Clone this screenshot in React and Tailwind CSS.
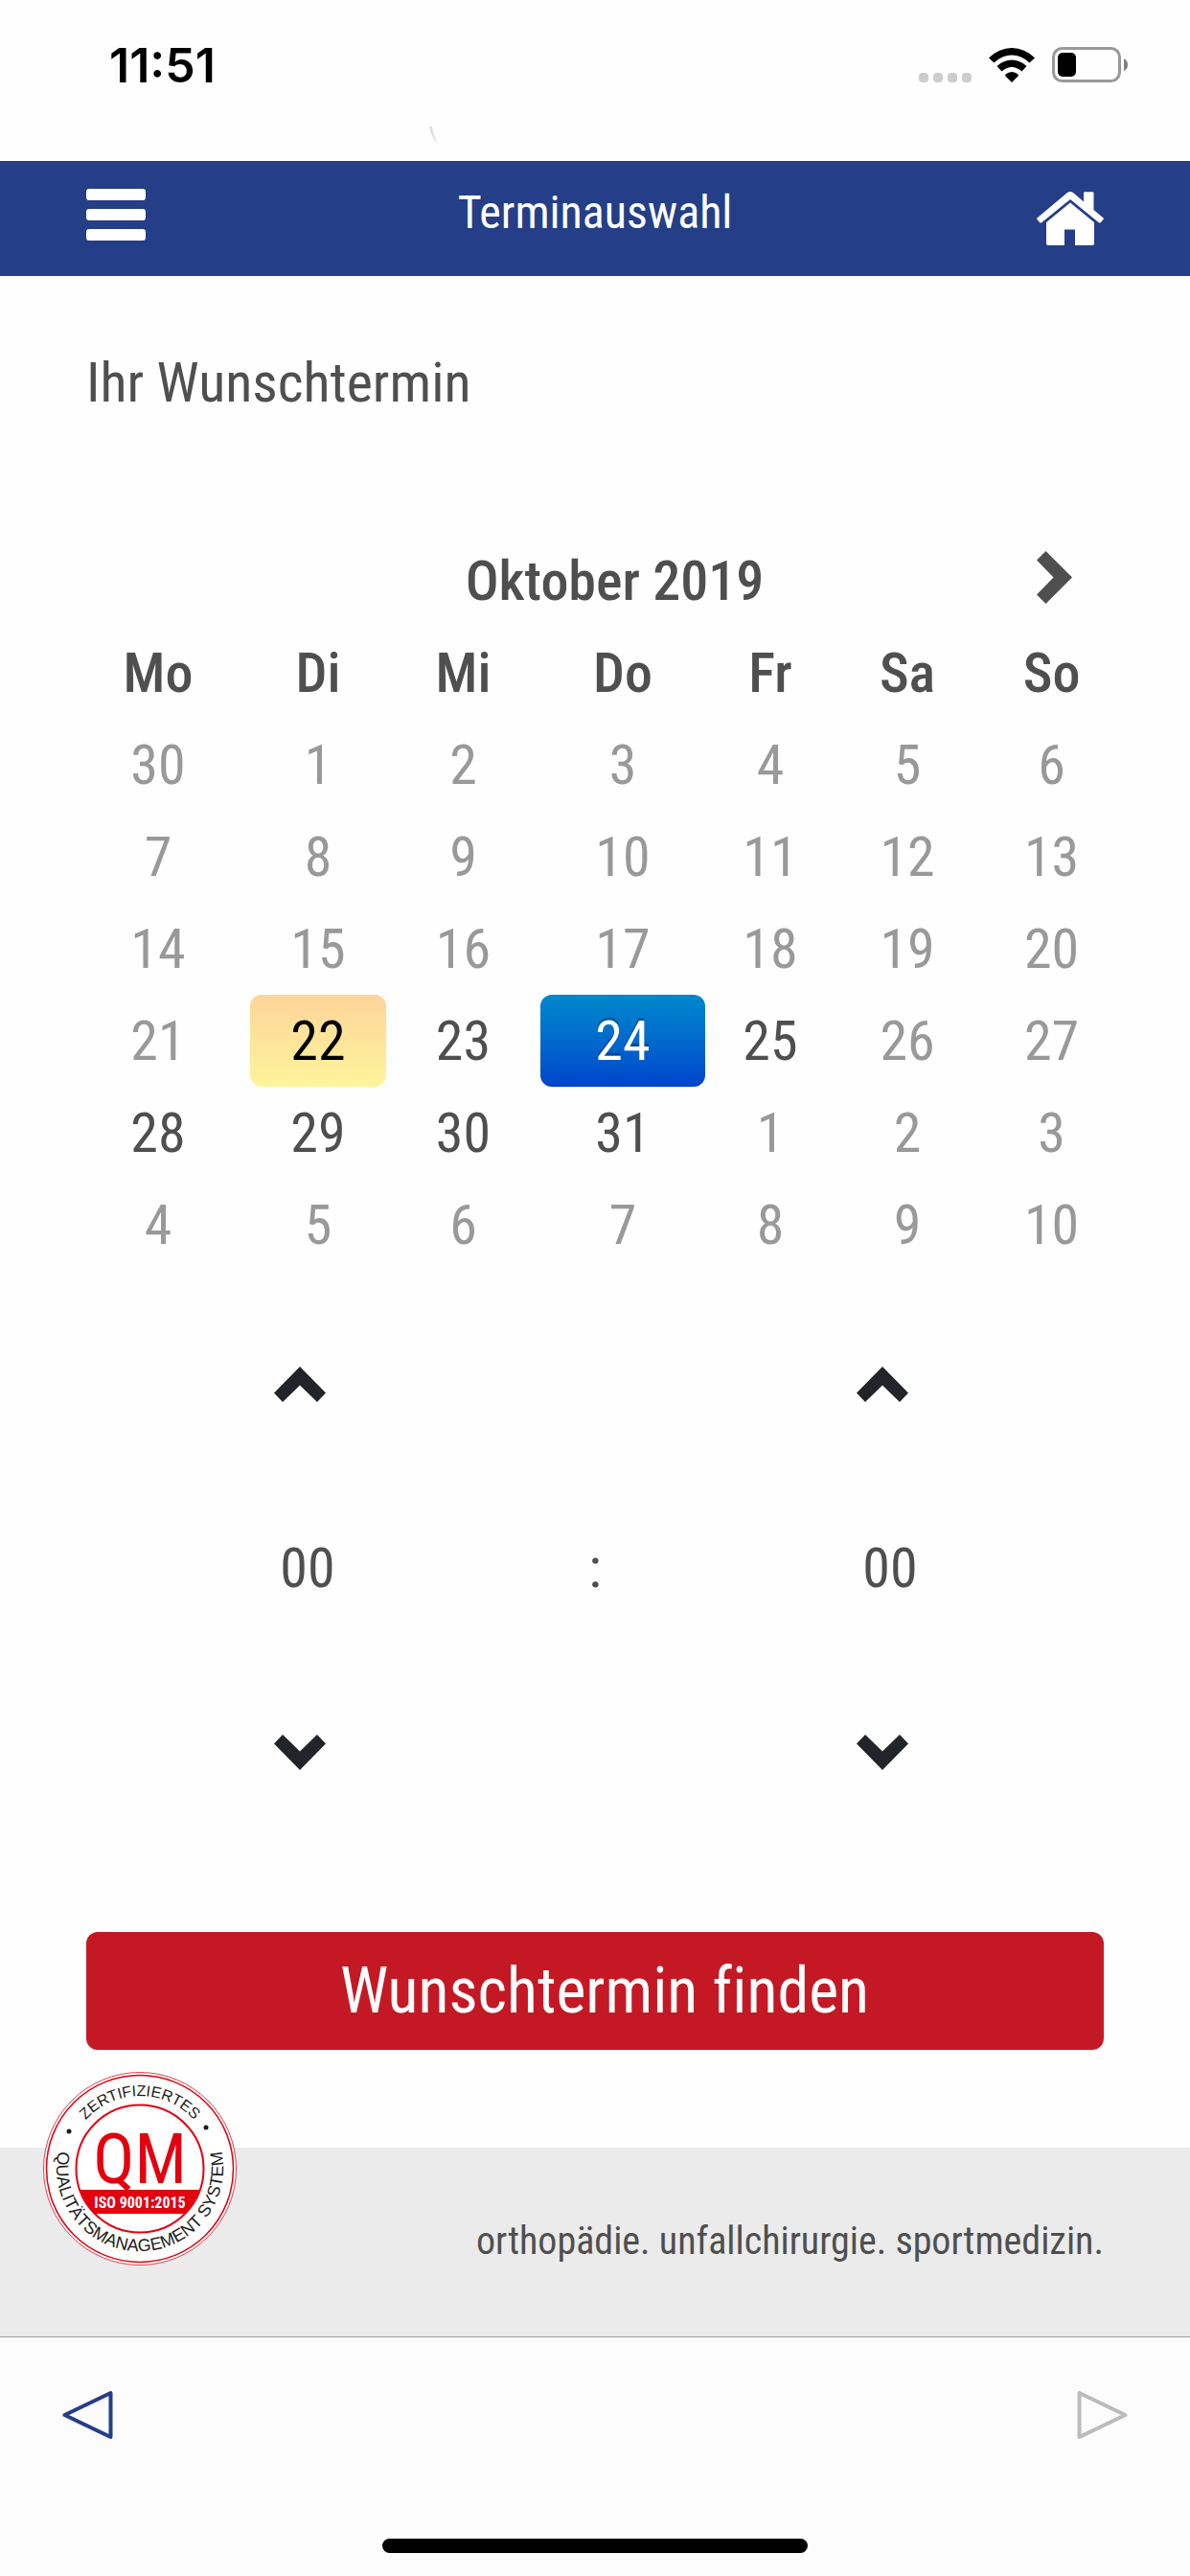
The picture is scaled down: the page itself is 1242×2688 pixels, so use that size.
/**
 * App.jsx
 * Appointment picker: month calendar, time spinner and practice footer.
 */

import { useState } from 'react';
import clsx from 'clsx';

const WEEKDAYS = ['Mo', 'Di', 'Mi', 'Do', 'Fr', 'Sa', 'So'];

const WEEKS = [
  [30, 1, 2, 3, 4, 5, 6],
  [7, 8, 9, 10, 11, 12, 13],
  [14, 15, 16, 17, 18, 19, 20],
  [21, 22, 23, 24, 25, 26, 27],
  [28, 29, 30, 31, 1, 2, 3],
  [4, 5, 6, 7, 8, 9, 10],
];

const TODAY = '3-1';

// Bookable slots, keyed by week index and weekday index
const OPEN_DAYS = ['3-1', '3-2', '3-3', '3-4', '4-0', '4-1', '4-2', '4-3'];

const pad = (n) => String(n).padStart(2, '0');

const StatusBar = () => (
  <div className="relative flex h-[168px] items-start justify-between pt-10 pr-16 pl-[114px]">
    <span className="font-['Inter'] text-[50px] leading-[56px] font-semibold text-black">11:51</span>
    <div className="flex items-end gap-[18px] pt-[9px]">
      <div className="flex gap-[5px]">
        <span className="size-[10px] rounded-[4px] bg-[#cccccc]" />
        <span className="size-[10px] rounded-[4px] bg-[#cccccc]" />
        <span className="size-[10px] rounded-[4px] bg-[#cccccc]" />
        <span className="size-[10px] rounded-[4px] bg-[#cccccc]" />
      </div>
      <svg className="h-9 w-12" viewBox="0 0 48 36" aria-hidden="true">
        <path d="M0 10.500Q10.500 0 24 0T48 10.500L42.500 15.500Q34 7.500 24 7.500T5.500 15.500Z" />
        <path d="M8.500 19Q15.500 12.500 24 12.500T39.500 19L34.500 24.500Q29.500 20 24 20T13.500 24.500Z" />
        <path d="M17.500 27.500Q20.500 25 24 25T30.500 27.500Q31 28.500 30.500 29.500L24 36L17.500 29.500Q17 28.500 17.500 27.500Z" />
      </svg>
      <svg className="h-[37px] w-20" viewBox="0 0 80 37" aria-hidden="true">
        <rect x="1.500" y="1.500" width="69" height="34" rx="9" fill="none" stroke="#999999" strokeWidth="3" />
        <rect x="6" y="6" width="19" height="25" rx="5" />
        <path d="M75 12Q79 14 79 18.500T75 25Z" fill="#808080" />
      </svg>
    </div>
    {/* sliver of the spinner that peeks out under the status bar */}
    <svg className="absolute top-[132px] left-[447px] h-5 w-3" viewBox="0 0 12 20" aria-hidden="true">
      <path d="M1 0H4Q5 10 11 20Q3 11 1 0Z" fill="#dcdcdc" />
    </svg>
  </div>
);

const HomeIcon = () => (
  <svg className="h-14 w-[70px]" viewBox="0 0 70 56" fill="currentColor" aria-hidden="true">
    <path d="M35 8L5.500 32Q4 33 3 32L.500 29Q-.500 28 1 27L32 1Q35-1 38 1L49 10.500V1.500Q49 .300 50.500 .300H58Q59.500 .300 59.500 1.500V19L69 27Q70.500 28 69.500 29L67 32Q66 33 64.500 32Z" />
    <path d="M35 11.500L60 32V54Q60 56 58 56H40V39.500H29V56H12Q10 56 10 54V32Z" />
  </svg>
);

const ChevronUp = ({ className }) => (
  <svg className={clsx('h-[37px] w-[54px]', className)} viewBox="0 0 54 37" fill="currentColor" aria-hidden="true">
    <path d="M27 0L54 27.500L45 37L27 19.500L9 37L0 27.500Z" />
  </svg>
);

const Header = () => (
  <header className="flex h-[120px] items-center justify-between bg-[#243e87] px-[90px] text-white">
    <button type="button" aria-label="Menü" className="flex w-[70px] flex-col gap-[9px] pr-2 pb-2">
      <span className="h-3 w-full rounded-[3px] bg-white" />
      <span className="h-3 w-full rounded-[3px] bg-white" />
      <span className="h-3 w-full rounded-[3px] bg-white" />
    </button>
    <h1 className="pb-3 text-[48px] leading-[60px]">Terminauswahl</h1>
    <a href="#home" aria-label="Startseite">
      <HomeIcon />
    </a>
  </header>
);

const Calendar = ({ selected, onSelect }) => (
  <table className="w-full table-fixed text-center text-[58px] leading-[96px]">
    <colgroup>
      <col className="w-[192px]" />
      <col className="w-[142px]" />
      <col className="w-[161px]" />
      <col className="w-[172px]" />
      <col className="w-[136px]" />
      <col className="w-[150px]" />
      <col className="w-[151px]" />
    </colgroup>
    <thead>
      <tr className="h-24">
        <td />
        <th colSpan={5} className="p-0 font-medium">Oktober 2019</th>
        <td className="p-0">
          <button type="button" aria-label="Nächster Monat" className="flex h-24 w-full items-center justify-center pb-2 pl-1.5">
            <svg className="h-[55px] w-[37px]" viewBox="0 0 37 55" fill="currentColor" aria-hidden="true">
              <path d="M9.500 0L37 27.500L9.500 55L0 45.500L17.500 27.500L0 9.500Z" />
            </svg>
          </button>
        </td>
      </tr>
      <tr className="h-24">
        {WEEKDAYS.map((day) => (
          <th key={day} scope="col" className="p-0 font-medium">{day}</th>
        ))}
      </tr>
    </thead>
    <tbody>
      {WEEKS.map((week, w) => (
        <tr key={w} className="h-24">
          {week.map((day, d) => {
            const id = `${w}-${d}`;
            const open = OPEN_DAYS.includes(id);
            return (
              <td key={id} className="p-0">
                <button
                  type="button"
                  disabled={!open}
                  onClick={() => onSelect(id)}
                  className={clsx(
                    'block h-24 w-full rounded-xl',
                    !open && 'text-[#999999]',
                    id === selected &&
                      'bg-linear-to-b from-[#0088cc] to-[#0044cc] text-white [text-shadow:0_-3px_0_rgba(0,0,0,0.25)]',
                    id === TODAY && id !== selected && 'bg-linear-to-b from-[#fdd49a] to-[#fdf59a] text-black'
                  )}
                >
                  {day}
                </button>
              </td>
            );
          })}
        </tr>
      ))}
    </tbody>
  </table>
);

const Spinner = ({ label, value, max, onChange }) => (
  <div className="flex flex-col items-center text-[#212529]">
    <button
      type="button"
      aria-label={`${label} erhöhen`}
      onClick={() => onChange((value + 1) % max)}
      className="flex h-48 items-center pr-2"
    >
      <ChevronUp />
    </button>
    <span className="pl-2 text-[58px] leading-[192px] text-[#4f4f4f]">{pad(value)}</span>
    <button
      type="button"
      aria-label={`${label} verringern`}
      onClick={() => onChange((value + max - 1) % max)}
      className="flex h-48 items-center pr-2"
    >
      <ChevronUp className="rotate-180" />
    </button>
  </div>
);

const QmSeal = () => (
  <svg className="size-[202px]" viewBox="-101 -101 202 202" role="img" aria-label="QM ISO 9001:2015">
    <defs>
      <path id="seal-top" d="M-76 0A76 76 0 0 1 76 0" />
      <path id="seal-bottom" d="M-83-27A87 87 0 1 0 83-27" />
      <clipPath id="seal-inner">
        <circle r="66" />
      </clipPath>
    </defs>
    <circle r="100.500" fill="#ffffff" stroke="#e3404a" strokeWidth="1" />
    <circle r="97.500" fill="none" stroke="#e3000f" strokeWidth="1.500" />
    <circle r="66.500" fill="none" stroke="#e3000f" strokeWidth="2" />
    <rect x="-67" y="22" width="134" height="25" fill="#e3000f" clipPath="url(#seal-inner)" />
    <g className="font-['Liberation_Sans']" fill="#1d1d1b" textAnchor="middle">
      <text fontSize="16">
        <textPath href="#seal-top" startOffset="50%">ZERTIFIZIERTES</textPath>
      </text>
      <text fontSize="18">
        <textPath href="#seal-bottom" startOffset="50%">QUALITÄTSMANAGEMENT SYSTEM</textPath>
      </text>
      <circle cx="-74" cy="-39" r="2.500" />
      <circle cx="69" cy="-43" r="2.500" />
    </g>
    <text y="15" textAnchor="middle" fontSize="72" fill="#e3000f">QM</text>
    <text y="41" textAnchor="middle" fontSize="16" fontWeight="700" fill="#ffffff">ISO 9001:2015</text>
  </svg>
);

const Footer = () => (
  <footer className="relative border-b border-[#a0a0a0] bg-[#ebebeb] px-[90px] pt-[72px] pb-[73px] text-right">
    <div className="absolute -top-[79px] left-[45px]">
      <QmSeal />
    </div>
    <p className="text-[40px] leading-[52px]">orthopädie. unfallchirurgie. sportmedizin.</p>
  </footer>
);

const BrowserBar = () => (
  <nav className="flex h-[249px] flex-col justify-between bg-[#fcfcfc] px-16 pt-[55px] pb-6">
    <div className="flex justify-between">
      <button type="button" aria-label="Zurück" className="text-[#243e87]">
        <svg className="h-[52px] w-[54px]" viewBox="0 0 54 52" fill="none" stroke="currentColor" strokeWidth="4" strokeLinejoin="round" aria-hidden="true">
          <path d="M3.500 26L51.500 3V49Z" />
        </svg>
      </button>
      <button type="button" aria-label="Vor" disabled className="text-[#bbbbbb]">
        <svg className="h-[52px] w-[54px]" viewBox="0 0 54 52" fill="none" stroke="currentColor" strokeWidth="4" strokeLinejoin="round" aria-hidden="true">
          <path d="M50.500 26L2.500 3V49Z" />
        </svg>
      </button>
    </div>
    <div className="h-[15px] w-[444px] self-center rounded-full bg-black" />
  </nav>
);

const App = () => {
  const [selected, setSelected] = useState('3-3');
  const [hour, setHour] = useState(0);
  const [minute, setMinute] = useState(0);

  return (
    <div className="w-full bg-[#fefefe] font-['Ubuntu_Condensed','Roboto_Condensed','Lato',sans-serif] text-[#4f4f4f] [font-variant-ligatures:no-common-ligatures]">
      <StatusBar />
      <Header />

      <main className="pt-[75px] pb-[102px]">
        <h2 className="px-[90px] text-[58px] leading-[72px]">Ihr Wunschtermin</h2>

        <div className="mt-[123px] px-[69px]">
          <Calendar selected={selected} onSelect={setSelected} />
        </div>

        <div className="mt-[22px] grid grid-cols-[1fr_154px_1fr] items-center px-[90px]">
          <Spinner label="Stunde" value={hour} max={24} onChange={setHour} />
          <span className="text-center text-[58px] leading-[192px]">:</span>
          <Spinner label="Minute" value={minute} max={60} onChange={setMinute} />
        </div>

        <div className="mt-[92px] px-[90px]">
          <button
            type="button"
            className="h-[123px] w-full rounded-xl bg-[#c41924] pl-5 text-[66px] leading-[80px] text-white"
          >
            Wunschtermin finden
          </button>
        </div>
      </main>

      <Footer />
      <BrowserBar />
    </div>
  );
};

export default App;
